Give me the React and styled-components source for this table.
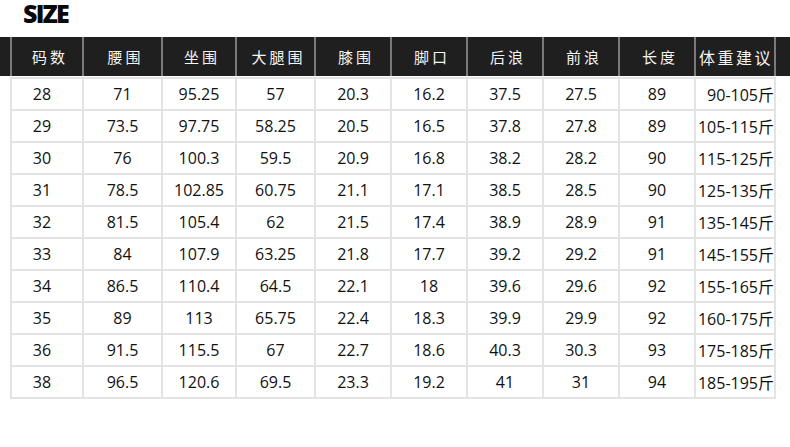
import React from "react";
import styled, { createGlobalStyle } from "styled-components";

const Global = createGlobalStyle`
  html, body { margin: 0; padding: 0; background: #ffffff; }
  body { font-family: "Open Sans", "Noto Sans CJK SC", sans-serif; }
`;

const COLS = "70px 77px 72px 77px 74px 74px 74px 74px 74px 78px";

const Page = styled.div`
  width: 790px;
  height: 447px;
  overflow: hidden;
  background: #fff;
`;

const Title = styled.div`
  height: 37px;
  padding: 1px 0 0 23px;
  box-sizing: border-box;
  font-family: "Open Sans", sans-serif;
  font-weight: 800;
  font-size: 25px;
  line-height: 24px;
  letter-spacing: -1.8px;
  color: #0a0a0a;
`;

const HeaderRow = styled.div`
  display: grid;
  grid-template-columns: 10px ${COLS} 1fr;
  column-gap: 2px;
  height: 39px;
  background: #7a7a7a;
`;

const HeadCell = styled.div`
  background: #1f1f1f;
  color: #f4f4f4;
  display: flex;
  align-items: center;
  justify-content: center;
  font-family: "Noto Sans CJK SC", sans-serif;
  font-size: ${(p) => (p.$wide ? "16px" : "15px")};
  letter-spacing: ${(p) => (p.$wide ? "2.5px" : "3px")};
  padding-left: ${(p) => (p.$wide ? "2px" : "6px")};
  white-space: nowrap;
  overflow: hidden;
`;

const Table = styled.div`
  margin: 1px 0 0 10px;
  width: max-content;
  display: grid;
  grid-template-columns: ${COLS};
  grid-auto-rows: 30px;
  gap: 2px;
  padding: 2px;
  background: #e3e3e3;
`;

const Cell = styled.div`
  background: #fff;
  display: flex;
  align-items: center;
  justify-content: ${(p) => (p.$right ? "flex-end" : "center")};
  padding-right: ${(p) => (p.$first ? "10px" : "0")};
  font-family: "Open Sans", "Noto Sans CJK SC", sans-serif;
  font-size: 16px;
  color: #111;
  white-space: nowrap;
`;

const headers = ["码数", "腰围", "坐围", "大腿围", "膝围", "脚口", "后浪", "前浪", "长度", "体重建议"];

const rows = [
  ["28", "71", "95.25", "57", "20.3", "16.2", "37.5", "27.5", "89", "90-105斤"],
  ["29", "73.5", "97.75", "58.25", "20.5", "16.5", "37.8", "27.8", "89", "105-115斤"],
  ["30", "76", "100.3", "59.5", "20.9", "16.8", "38.2", "28.2", "90", "115-125斤"],
  ["31", "78.5", "102.85", "60.75", "21.1", "17.1", "38.5", "28.5", "90", "125-135斤"],
  ["32", "81.5", "105.4", "62", "21.5", "17.4", "38.9", "28.9", "91", "135-145斤"],
  ["33", "84", "107.9", "63.25", "21.8", "17.7", "39.2", "29.2", "91", "145-155斤"],
  ["34", "86.5", "110.4", "64.5", "22.1", "18", "39.6", "29.6", "92", "155-165斤"],
  ["35", "89", "113", "65.75", "22.4", "18.3", "39.9", "29.9", "92", "160-175斤"],
  ["36", "91.5", "115.5", "67", "22.7", "18.6", "40.3", "30.3", "93", "175-185斤"],
  ["38", "96.5", "120.6", "69.5", "23.3", "19.2", "41", "31", "94", "185-195斤"],
];

export default function App() {
  return (
    <Page>
      <Global />
      <Title>SIZE</Title>
      <HeaderRow>
        <HeadCell />
        {headers.map((h, i) => (
          <HeadCell key={h} $wide={i === headers.length - 1}>
            {h}
          </HeadCell>
        ))}
        <HeadCell />
      </HeaderRow>
      <Table>
        {rows.map((r) =>
          r.map((v, i) => (
            <Cell key={r[0] + "-" + i} $first={i === 0} $right={i === r.length - 1}>
              {v}
            </Cell>
          ))
        )}
      </Table>
    </Page>
  );
}
